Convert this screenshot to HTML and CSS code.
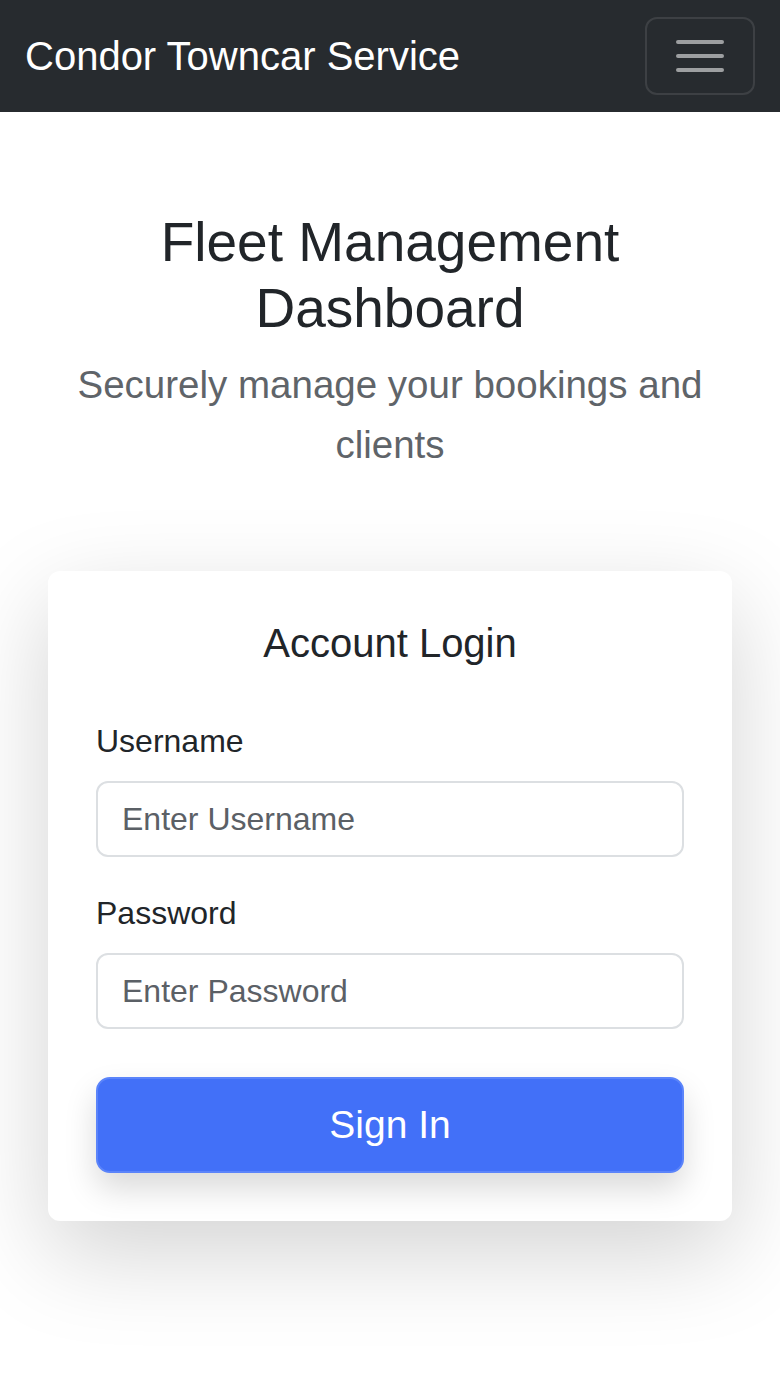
FILE: index.html
```html
<!DOCTYPE html>
<html lang="en">
<head>
<meta charset="utf-8">
<title>Condor Towncar Service</title>
<link rel="stylesheet" href="styles.css">
</head>
<body>
<nav class="navbar">
  <a class="brand" href="#">Condor Towncar Service</a>
  <button class="toggler" type="button" aria-label="Toggle navigation">
    <svg width="48" height="40" viewBox="0 0 48 40" aria-hidden="true">
      <path d="M2 6H46M2 20H46M2 34H46" stroke="rgba(255,255,255,0.55)" stroke-width="4" stroke-linecap="round"/>
    </svg>
  </button>
</nav>
<main class="main">
  <header class="hero">
    <h1 class="title">Fleet Management Dashboard</h1>
    <p class="lead">Securely manage your bookings and clients</p>
  </header>
  <section class="card">
    <h2 class="card-title">Account Login</h2>
    <form class="form">
      <div class="group">
        <label class="label" for="u">Username</label>
        <input class="input" id="u" type="text" placeholder="Enter Username">
      </div>
      <div class="group">
        <label class="label" for="p">Password</label>
        <input class="input" id="p" type="password" placeholder="Enter Password">
      </div>
      <button class="btn" type="button">Sign In</button>
    </form>
  </section>
</main>
</body>
</html>
```
FILE: styles.css
```css
* { box-sizing: border-box; }
html, body { margin: 0; padding: 0; }
body {
  font-family: "Liberation Sans", Arial, sans-serif;
  color: #212529;
  background: #fff;
}
.navbar {
  height: 112px;
  background: #272b2f;
  display: flex;
  align-items: center;
  justify-content: space-between;
  padding: 0 25px 0 25px;
}
.brand {
  color: #fff;
  text-decoration: none;
  font-size: 40px;
  line-height: 1;
}
.toggler {
  width: 110px;
  height: 78px;
  background: transparent;
  border: 2px solid rgba(255,255,255,0.1);
  border-radius: 12px;
  display: flex;
  align-items: center;
  justify-content: center;
  padding: 0;
}
.toggler svg { display: block; }
.main {
  padding: 97px 48px 180px;
}
.hero {
  text-align: center;
  padding: 0 24px;
}
.title {
  margin: 0 0 14px;
  font-size: 55px;
  font-weight: 500;
  line-height: 66px;
  color: #212529;
}
.lead {
  margin: 0;
  font-size: 38.5px;
  line-height: 60px;
  color: #5f6469;
  font-weight: 300;
}
.card {
  margin-top: 96px;
  background: #fff;
  border-radius: 12px;
  padding: 48px;
  box-shadow: 0 32px 96px rgba(0,0,0,0.175);
}
.card-title {
  margin: 0 0 50px;
  text-align: center;
  font-size: 40px;
  font-weight: 500;
  line-height: 48px;
}
.form { display: flex; flex-direction: column; }
.group {
  display: flex;
  flex-direction: column;
  margin-bottom: 32px;
}
.group:last-of-type { margin-bottom: 48px; }
.label {
  font-size: 32px;
  line-height: 48px;
  margin-bottom: 16px;
}
.input {
  height: 76px;
  border: 2px solid #dcdfe2;
  border-radius: 12px;
  padding: 0 24px;
  font-family: inherit;
  font-size: 32px;
  color: #495057;
  background: #fff;
}
.input::placeholder { color: #5b6066; opacity: 1; }
.btn {
  height: 96px;
  border: 2px solid #5b84fa;
  border-radius: 14px;
  background: #4270f8;
  color: #fff;
  font-family: inherit;
  font-size: 39px;
  box-shadow: 0 16px 32px rgba(0,0,0,0.15);
  padding: 0;
}
```
